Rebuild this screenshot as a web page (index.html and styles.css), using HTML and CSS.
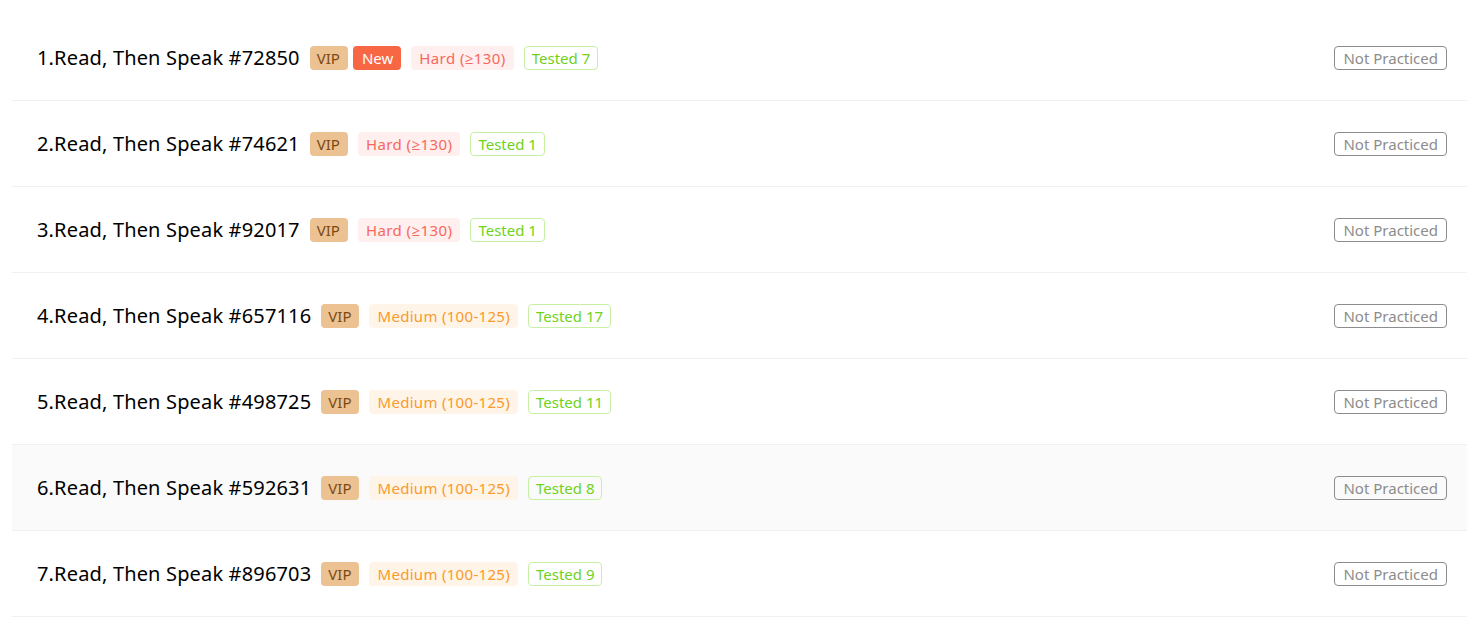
FILE: index.html
```html
<!DOCTYPE html>
<html>
<head>
<meta charset="utf-8">
<link rel="stylesheet" href="styles.css">
</head>
<body>
<div class="list">
  <div class="row">
    <div class="left">
      <span class="title">1.Read, Then Speak #72850</span>
      <span class="tag vip">VIP</span>
      <span class="tag new">New</span>
      <span class="tag hard">Hard (≥130)</span>
      <span class="tag tested">Tested 7</span>
    </div>
    <span class="status">Not Practiced</span>
  </div>
  <div class="row">
    <div class="left">
      <span class="title">2.Read, Then Speak #74621</span>
      <span class="tag vip">VIP</span>
      <span class="tag hard">Hard (≥130)</span>
      <span class="tag tested">Tested 1</span>
    </div>
    <span class="status">Not Practiced</span>
  </div>
  <div class="row">
    <div class="left">
      <span class="title">3.Read, Then Speak #92017</span>
      <span class="tag vip">VIP</span>
      <span class="tag hard">Hard (≥130)</span>
      <span class="tag tested">Tested 1</span>
    </div>
    <span class="status">Not Practiced</span>
  </div>
  <div class="row">
    <div class="left">
      <span class="title">4.Read, Then Speak #657116</span>
      <span class="tag vip">VIP</span>
      <span class="tag medium">Medium (100-125)</span>
      <span class="tag tested">Tested 17</span>
    </div>
    <span class="status">Not Practiced</span>
  </div>
  <div class="row">
    <div class="left">
      <span class="title">5.Read, Then Speak #498725</span>
      <span class="tag vip">VIP</span>
      <span class="tag medium">Medium (100-125)</span>
      <span class="tag tested">Tested 11</span>
    </div>
    <span class="status">Not Practiced</span>
  </div>
  <div class="row hover">
    <div class="left">
      <span class="title">6.Read, Then Speak #592631</span>
      <span class="tag vip">VIP</span>
      <span class="tag medium">Medium (100-125)</span>
      <span class="tag tested">Tested 8</span>
    </div>
    <span class="status">Not Practiced</span>
  </div>
  <div class="row">
    <div class="left">
      <span class="title">7.Read, Then Speak #896703</span>
      <span class="tag vip">VIP</span>
      <span class="tag medium">Medium (100-125)</span>
      <span class="tag tested">Tested 9</span>
    </div>
    <span class="status">Not Practiced</span>
  </div>
</div>
</body>
</html>
```
FILE: styles.css
```css
html, body {
  margin: 0;
  padding: 0;
  background: #fff;
  font-family: "Noto Sans", "Open Sans", sans-serif;
}
.list {
  margin: 15px 0 0 12px;
}
.row {
  height: 86px;
  box-sizing: border-box;
  border-bottom: 1px solid #f0f0f0;
  display: flex;
  align-items: center;
  justify-content: space-between;
  padding: 0 20px 0 25px;
}
.row.hover {
  background: #fafafa;
}
.left {
  display: flex;
  align-items: center;
}
.title {
  font-size: 20px;
  letter-spacing: 0.16px;
  color: #000;
  margin-right: 10px;
}
.tag {
  font-size: 15px;
  line-height: 24px;
  height: 24px;
  padding: 0 8px;
  border-radius: 4px;
  box-sizing: border-box;
  margin-right: 10px;
  white-space: nowrap;
}
.vip {
  background: #ecc293;
  color: #7a4a15;
  padding: 0 8px 0 7px;
  margin-right: 5px;
}
.vip + .hard, .vip + .medium {
  margin-left: 5px;
}
.new {
  background: #f86744;
  color: #fff;
  padding: 0 8px 0 9px;
}
.hard {
  background: #ffefee;
  color: #f7685c;
  letter-spacing: 0.42px;
}
.medium {
  background: #fff4e8;
  color: #fa9a2a;
  letter-spacing: 0.3px;
}
.tested {
  border: 1px solid #c8efa6;
  color: #6fd21b;
  line-height: 22px;
  padding: 0 7px;
}
.status {
  font-size: 15px;
  line-height: 22px;
  height: 24px;
  box-sizing: border-box;
  padding: 0 8px;
  border: 1px solid #8c8c8c;
  border-radius: 4px;
  color: #8c8c8c;
}
```
